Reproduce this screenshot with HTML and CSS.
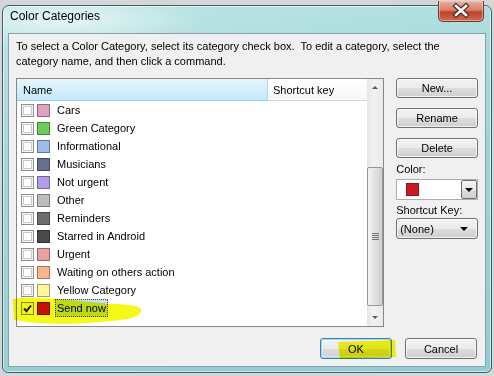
FILE: index.html
```html
<!DOCTYPE html>
<html lang="en">
<head>
    <meta charset="UTF-8">
    <title>Color Categories</title>
    <link rel="stylesheet" href="styles.css">
</head>
<body>

    <div class="window">
        <div class="titlebar">
            <span class="title">Color Categories</span>
            <div class="close">
                <svg width="44" height="20" viewBox="0 0 44 20">
                    <path d="M17 5 L27 14 M27 5 L17 14" stroke="#4a2a2a" stroke-width="5" stroke-linecap="square"/>
                    <path d="M17 5 L27 14 M27 5 L17 14" stroke="#ffffff" stroke-width="2.6" stroke-linecap="square"/>
                </svg>
            </div>
        </div>

        <div class="client">
            <p class="intro">To select a Color Category, select its category check box.&nbsp; To edit a category, select the<br>category name, and then click a command.</p>

            <div class="main">
                <div class="list">
                    <div class="list-body">
                        <div class="list-header">
                            <div class="col-name">Name</div>
                            <div class="col-key">Shortcut key</div>
                        </div>
                        <ul class="rows">
                            <li><span class="check"></span><span class="swatch c-cars"></span><span class="label">Cars</span></li>
                            <li><span class="check"></span><span class="swatch c-green"></span><span class="label">Green Category</span></li>
                            <li><span class="check"></span><span class="swatch c-info"></span><span class="label">Informational</span></li>
                            <li><span class="check"></span><span class="swatch c-musicians"></span><span class="label">Musicians</span></li>
                            <li><span class="check"></span><span class="swatch c-noturgent"></span><span class="label">Not urgent</span></li>
                            <li><span class="check"></span><span class="swatch c-other"></span><span class="label">Other</span></li>
                            <li><span class="check"></span><span class="swatch c-reminders"></span><span class="label">Reminders</span></li>
                            <li><span class="check"></span><span class="swatch c-starred"></span><span class="label">Starred in Android</span></li>
                            <li><span class="check"></span><span class="swatch c-urgent"></span><span class="label">Urgent</span></li>
                            <li><span class="check"></span><span class="swatch c-waiting"></span><span class="label">Waiting on others action</span></li>
                            <li><span class="check"></span><span class="swatch c-yellow"></span><span class="label">Yellow Category</span></li>
                            <li class="selected">
                                <span class="check checked">
                                    <svg width="11" height="11" viewBox="0 0 11 11"><path d="M2 5.5 L4.5 8.2 L9 2.5" stroke="#1e1e1e" stroke-width="2" fill="none"/></svg>
                                </span><span class="swatch c-send"></span><span class="label">Send now</span>
                            </li>
                        </ul>
                    </div>
                    <div class="scrollbar">
                        <div class="sb-btn"><span class="arrow-up"></span></div>
                        <div class="sb-track">
                            <div class="sb-thumb"><span class="grip"></span></div>
                        </div>
                        <div class="sb-btn"><span class="arrow-down"></span></div>
                    </div>
                </div>

                <div class="side">
                    <button class="btn">New...</button>
                    <button class="btn">Rename</button>
                    <button class="btn">Delete</button>
                    <div class="side-label">Color:</div>
                    <div class="combo">
                        <span class="combo-value"><span class="swatch c-pick"></span></span>
                        <span class="combo-drop"><span class="arrow-down dark"></span></span>
                    </div>
                    <div class="side-label key-label">Shortcut Key:</div>
                    <div class="select">
                        <span>(None)</span>
                        <span class="arrow-down dark"></span>
                    </div>
                </div>
            </div>

            <div class="footer">
                <button class="btn btn-default">OK</button>
                <button class="btn">Cancel</button>
            </div>

            <!-- highlighter marks drawn over the dialog -->
            <svg class="marker" width="477" height="333" viewBox="9 34 477 333">
                <path d="M13 299 C30 296 60 299 100 303 C124 305 140 304 141 310 C142 317 130 320 100 322 C70 325 36 324 14 320 Z" fill="#f6f81a"/>
                <path d="M338 342 L395 340 L396 357 L340 359 Z" fill="#f6f81a"/>
            </svg>
        </div>
    </div>

</body>
</html>
```

FILE: styles.css
```css
body {
    margin: 0;
    background-color: #d4d6d7;
    font-family: "Liberation Sans", Arial, sans-serif;
    font-size: 11px;
    color: #000;
}

.window {
    position: relative;
    box-sizing: border-box;
    width: 490px;
    height: 368px;
    margin: 5px 0 0 2px;
    padding: 0 5px 5px 5px;
    border: 1px solid #3f5f66;
    border-radius: 7px 7px 6px 6px;
    background: radial-gradient(ellipse 140px 26px at 60px 14px, rgba(235, 248, 248, 0.9), rgba(235, 248, 248, 0) 100%),
                linear-gradient(170deg, #bfe6e6 0%, #a3d8d9 35%, #8fcdd0 100%);
    box-shadow: inset 0 0 0 1px rgba(255, 255, 255, 0.55);
    display: flex;
    flex-direction: column;
}

.titlebar {
    height: 27px;
    padding: 3px 0 0 2px;
    box-sizing: border-box;
}

.title {
    font-size: 12px;
}

.close {
    position: absolute;
    top: -5px;
    right: 7px;
    width: 44px;
    height: 20px;
    border: 1px solid #6b3a32;
    border-top: none;
    border-radius: 0 0 5px 5px;
    background: linear-gradient(#e8b0a0 0%, #d8806a 45%, #c0402a 55%, #d06a50 100%);
    box-shadow: inset 0 0 0 1px rgba(255, 220, 210, 0.5);
}

.close svg {
    display: block;
}

.client {
    flex: 1;
    position: relative;
    background-color: #f0f0f0;
    border: 1px solid #87a2a9;
    padding: 4px 7px 0 7px;
    display: flex;
    flex-direction: column;
}

.intro {
    margin: 0;
    line-height: 15px;
    padding-top: 1px;
}

.main {
    display: flex;
    margin-top: 9px;
}

.list {
    box-sizing: border-box;
    width: 369px;
    height: 249px;
    border: 1px solid #828790;
    background-color: #fff;
    display: flex;
}

.list-body {
    flex: 1;
}

.list-header {
    display: flex;
    height: 22px;
    line-height: 22px;
}

.col-name {
    width: 244px;
    padding-left: 6px;
    background: linear-gradient(#e6f6fd 0%, #d5effb 50%, #c4e8f9 100%);
    border-bottom: 1px solid #96d2ee;
    border-right: 1px solid #a9d7ec;
}

.col-key {
    flex: 1;
    padding-left: 5px;
    background: linear-gradient(#ffffff, #f5f6f7);
    border-bottom: 1px solid #d5d5d5;
}

.rows {
    list-style: none;
    margin: 0;
    padding: 0;
}

.rows li {
    height: 18px;
    display: flex;
    align-items: center;
    padding-left: 4px;
}

.check {
    box-sizing: border-box;
    width: 13px;
    height: 13px;
    border: 1px solid #8e8f8f;
    background: #fff;
    box-shadow: inset 0 0 0 1px #f4f4f4, inset 0 0 0 2px #c9cbcd;
    margin-right: 3px;
    display: flex;
    align-items: center;
    justify-content: center;
}

.check.checked {
    box-shadow: inset 0 0 0 1px #f4f4f4;
}

.swatch {
    box-sizing: border-box;
    width: 13px;
    height: 13px;
    border: 1px solid rgba(0, 0, 0, 0.35);
    margin-right: 5px;
}

.label {
    height: 16px;
    line-height: 17px;
    padding: 0 1px;
    border: 1px solid transparent;
}

.selected .label {
    background-color: #c4def2;
    border: 1px dotted #444;
}

.c-cars { background-color: #d8a4bf; }
.c-green { background-color: #6ccc5c; }
.c-info { background-color: #9cbcec; }
.c-musicians { background-color: #65718f; }
.c-noturgent { background-color: #b49be6; }
.c-other { background-color: #bcbcbc; }
.c-reminders { background-color: #6e6e6e; }
.c-starred { background-color: #4a4a4a; }
.c-urgent { background-color: #eba0a0; }
.c-waiting { background-color: #f8b68a; }
.c-yellow { background-color: #fff59a; }
.c-send { background-color: #c8120c; }
.c-pick { background-color: #c81c24; }

.scrollbar {
    width: 16px;
    display: flex;
    flex-direction: column;
    background: linear-gradient(to right, #e6e6e6, #f2f2f2 40%, #eaeaea);
}

.sb-btn {
    height: 17px;
    display: flex;
    align-items: center;
    justify-content: center;
}

.sb-track {
    flex: 1;
}

.sb-thumb {
    box-sizing: border-box;
    height: 139px;
    margin: 71px 0 0 0;
    border: 1px solid #979797;
    border-radius: 2px;
    background: linear-gradient(to right, #f4f4f4, #e2e2e2 50%, #cfcfcf);
    display: flex;
    align-items: center;
    justify-content: center;
}

.grip {
    width: 7px;
    height: 7px;
    background: repeating-linear-gradient(#6f6f6f 0 1px, transparent 1px 2px);
}

.arrow-up {
    width: 0;
    height: 0;
    border-left: 3px solid transparent;
    border-right: 3px solid transparent;
    border-bottom: 3px solid #5a5a5a;
}

.arrow-down {
    width: 0;
    height: 0;
    border-left: 3px solid transparent;
    border-right: 3px solid transparent;
    border-top: 3px solid #5a5a5a;
}

.arrow-down.dark {
    border-left-width: 4px;
    border-right-width: 4px;
    border-top: 4px solid #000;
}

.side {
    width: 82px;
    margin-left: 12px;
    display: flex;
    flex-direction: column;
}

.btn {
    box-sizing: border-box;
    height: 20px;
    margin-bottom: 10px;
    padding: 0;
    border: 1px solid #707070;
    border-radius: 3px;
    background: linear-gradient(#f2f2f2 0%, #ebebeb 50%, #dddddd 51%, #cfcfcf 100%);
    box-shadow: inset 0 0 0 1px rgba(255, 255, 255, 0.7);
    font-family: "Liberation Sans", Arial, sans-serif;
    font-size: 11px;
    color: #000;
}

.side-label {
    margin-top: -6px;
    line-height: 15px;
}

.combo {
    box-sizing: border-box;
    height: 21px;
    margin-top: 2px;
    border: 1px solid #abadb3;
    background-color: #fff;
    display: flex;
}

.combo-value {
    flex: 1;
    display: flex;
    align-items: center;
    padding-left: 9px;
}

.combo-value .swatch {
    margin: 0;
    border-color: #a01018;
}

.combo-drop {
    box-sizing: border-box;
    width: 16px;
    border: 1px solid #707070;
    border-radius: 2px;
    background: linear-gradient(#f2f2f2 0%, #ebebeb 50%, #dddddd 51%, #cfcfcf 100%);
    display: flex;
    align-items: center;
    justify-content: center;
}

.key-label {
    margin-top: 3px;
}

.select {
    box-sizing: border-box;
    height: 21px;
    border: 1px solid #707070;
    border-radius: 3px;
    background: linear-gradient(#f2f2f2 0%, #ebebeb 50%, #dddddd 51%, #cfcfcf 100%);
    box-shadow: inset 0 0 0 1px rgba(255, 255, 255, 0.7);
    display: flex;
    align-items: center;
    justify-content: space-between;
    padding: 0 9px 0 3px;
}

.footer {
    display: flex;
    justify-content: flex-end;
    gap: 13px;
    margin-top: 11px;
    padding-right: 1px;
}

.footer .btn {
    width: 72px;
    height: 21px;
    margin: 0;
}

.btn-default {
    border-color: #3c7fb1;
    box-shadow: inset 0 0 0 1px #9fdcf8, inset 0 0 0 2px rgba(255, 255, 255, 0.4);
}

.marker {
    position: absolute;
    left: 0;
    top: 0;
    mix-blend-mode: multiply;
    pointer-events: none;
}
```
